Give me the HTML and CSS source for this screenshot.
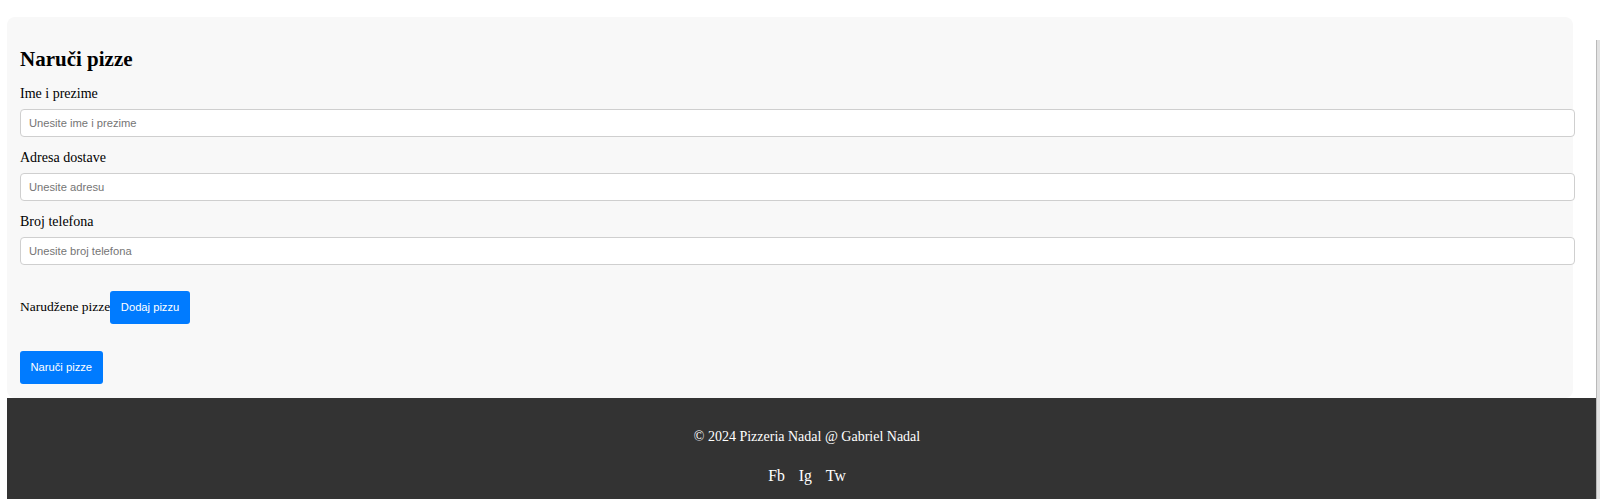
FILE: index.html
```html
<!DOCTYPE html>
<html lang="hr">
<head>
<meta charset="utf-8">
<title>Pizzeria Nadal</title>
<link rel="stylesheet" href="styles.css">
</head>
<body>
<main class="page">
  <section class="card">
    <h2 class="title">Naruči pizze</h2>
    <form class="order-form">
      <div class="field">
        <label class="field-label" for="ime">Ime i prezime</label>
        <input class="field-input" id="ime" type="text" placeholder="Unesite ime i prezime">
      </div>
      <div class="field">
        <label class="field-label" for="adresa">Adresa dostave</label>
        <input class="field-input" id="adresa" type="text" placeholder="Unesite adresu">
      </div>
      <div class="field">
        <label class="field-label" for="tel">Broj telefona</label>
        <input class="field-input" id="tel" type="text" placeholder="Unesite broj telefona">
      </div>
      <div class="pizza-row"><span class="pizza-label">Narudžene pizze</span><button type="button" class="btn">Dodaj pizzu</button></div>
      <div class="submit-row"><button type="button" class="btn">Naruči pizze</button></div>
    </form>
  </section>
  <footer class="footer">
    <p class="copy">© 2024 Pizzeria Nadal @ Gabriel Nadal</p>
    <div class="social"><a class="social-link" href="#">Fb</a> <a class="social-link" href="#">Ig</a> <a class="social-link" href="#">Tw</a></div>
  </footer>
</main>
<div class="scrollbar"></div>
</body>
</html>
```

FILE: styles.css
```css
html, body {
  margin: 0;
  padding: 0;
  background: #ffffff;
  overflow: hidden;
  height: 100%;
}

body {
  font-family: "Liberation Serif", "Times New Roman", serif;
  font-size: 14px;
  color: #000;
}

.page {
  padding: 17px 0 0 7px;
}

.card {
  width: 1540px;
  padding: 13px 13px 14px 13px;
  background: #f8f8f8;
  border-radius: 8px;
}

.title {
  font-size: 21px;
  line-height: 24px;
  font-weight: bold;
  margin: 17px 0 15px 0;
}

.order-form {
  margin: 0;
}

.field {
  margin-bottom: 13px;
}

.field-label {
  display: block;
  font-size: 14px;
  line-height: 16px;
  margin-bottom: 7px;
}

.field-input {
  display: block;
  box-sizing: content-box;
  width: 100%;
  height: 26px;
  padding: 0 5px 0 8px;
  margin: 0;
  border: 1px solid #cfcfcf;
  border-radius: 4px;
  background: #fff;
  font-family: "Liberation Sans", Arial, sans-serif;
  font-size: 11.2px;
  color: #333;
  outline: none;
}

.field-input::placeholder {
  color: #757575;
}

.pizza-row {
  margin-top: 26px;
  line-height: 16px;
}

.pizza-label {
  font-size: 13.5px;
}

.btn {
  display: inline-block;
  margin: 0;
  padding: 10px 10.5px;
  border: none;
  border-radius: 3px;
  background: #007bff;
  color: #fff;
  font-family: "Liberation Sans", Arial, sans-serif;
  font-size: 11.2px;
  line-height: 13px;
  cursor: pointer;
}

.submit-row {
  margin-top: 27px;
}

.footer {
  width: 1600px;
  height: 120px;
  box-sizing: border-box;
  padding-top: 31px;
  background: #333333;
  color: #fff;
  text-align: center;
}

.copy {
  margin: 0;
  font-size: 14px;
  line-height: 16px;
}

.social {
  margin-top: 22px;
  font-size: 15.75px;
  line-height: 18px;
}

.social-link {
  color: #fff;
  text-decoration: none;
  margin: 0 5px;
}

.scrollbar {
  position: fixed;
  top: 40px;
  right: 0;
  bottom: 0;
  width: 3px;
  background: #e2e2e2;
  border-left: 1px solid #b9b9b9;
}
```
